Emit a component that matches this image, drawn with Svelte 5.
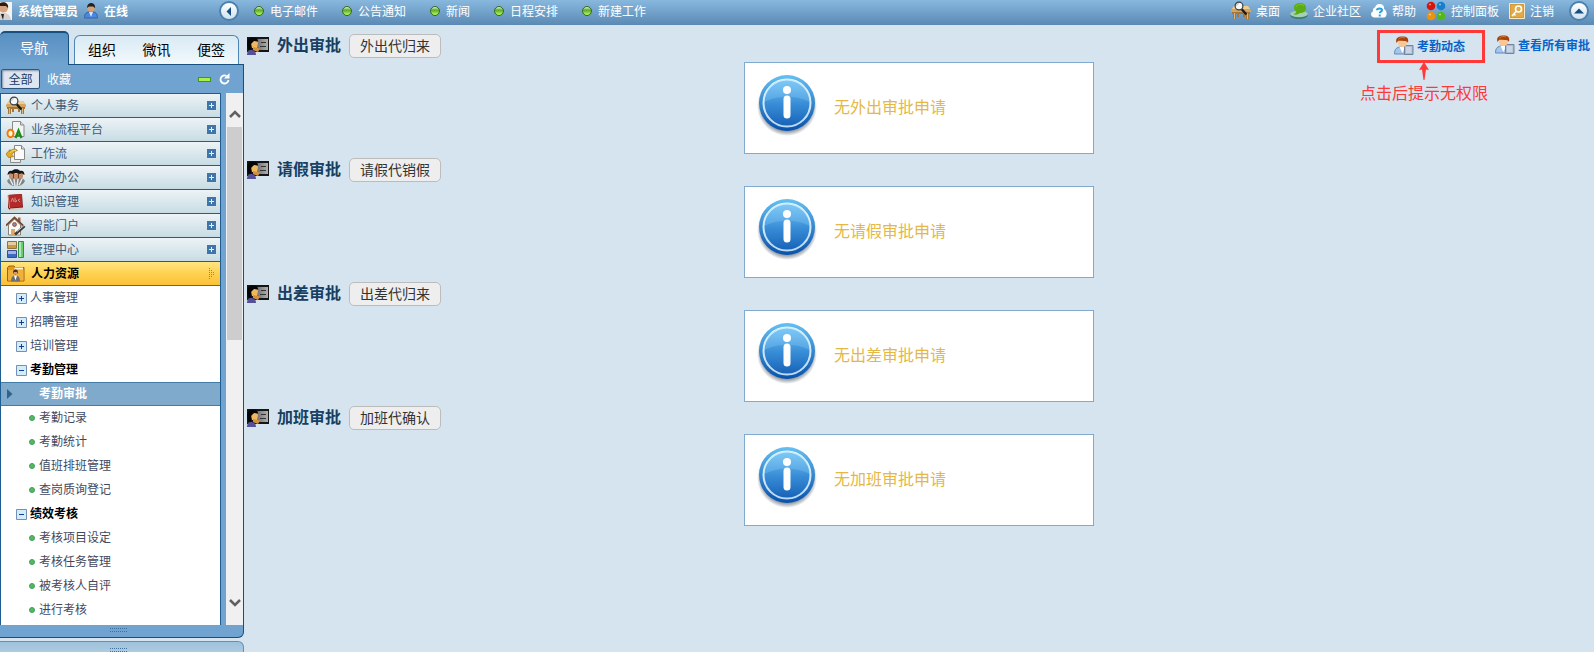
<script lang="ts">
  type Entry = { icon: string; label: string };
  type TreeNode = { kind: 'plus' | 'minus' | 'leaf'; label: string; active?: boolean };

  const shortcuts = ['电子邮件', '公告通知', '新闻', '日程安排', '新建工作'];

  const tools: Entry[] = [
    { icon: 'desk', label: '桌面' },
    { icon: 'community', label: '企业社区' },
    { icon: 'help', label: '帮助' },
    { icon: 'panel', label: '控制面板' },
    { icon: 'key', label: '注销' },
  ];

  const modules: Entry[] = [
    { icon: 'desk', label: '个人事务' },
    { icon: 'oa', label: '业务流程平台' },
    { icon: 'flow', label: '工作流' },
    { icon: 'office', label: '行政办公' },
    { icon: 'book', label: '知识管理' },
    { icon: 'house', label: '智能门户' },
    { icon: 'blocks', label: '管理中心' },
  ];

  const tree: TreeNode[] = [
    { kind: 'plus', label: '人事管理' },
    { kind: 'plus', label: '招聘管理' },
    { kind: 'plus', label: '培训管理' },
    { kind: 'minus', label: '考勤管理' },
    { kind: 'leaf', label: '考勤审批', active: true },
    { kind: 'leaf', label: '考勤记录' },
    { kind: 'leaf', label: '考勤统计' },
    { kind: 'leaf', label: '值班排班管理' },
    { kind: 'leaf', label: '查岗质询登记' },
    { kind: 'minus', label: '绩效考核' },
    { kind: 'leaf', label: '考核项目设定' },
    { kind: 'leaf', label: '考核任务管理' },
    { kind: 'leaf', label: '被考核人自评' },
    { kind: 'leaf', label: '进行考核' },
  ];

  const approvals = [
    { title: '外出审批', action: '外出代归来', empty: '无外出审批申请' },
    { title: '请假审批', action: '请假代销假', empty: '无请假审批申请' },
    { title: '出差审批', action: '出差代归来', empty: '无出差审批申请' },
    { title: '加班审批', action: '加班代确认', empty: '无加班审批申请' },
  ];
</script>

{#snippet glyph(name: string)}
  {#if name === 'desk'}
    <svg width="20" height="20" viewBox="0 0 20 20" aria-hidden="true">
      <path d="M1 10h18v3h-1v5h-3v-5h-1v3h-2v-3H8v3H6v-3H5v5H2v-5H1z" fill="#a67538" />
      <path d="m0 9 3-4h14l3 4v2H0z" fill="#d4a463" />
      <path d="m1 8 2-3h14l2 3z" fill="#eecb91" />
      <path d="M3 12h1v6H3zM16 12h1v6h-1z" fill="#dfb577" />
      <path d="m10.500 8 5 5.500" stroke="#1d1d1d" stroke-width="2.400" />
      <circle cx="8" cy="5" r="3.900" fill="#f4f8fa" stroke="#3c3c3c" stroke-width="1.200" />
      <path d="M5.500 5A3 3 0 0 1 8 2.500" fill="none" stroke="#b8c2cc" />
    </svg>
  {:else if name === 'community'}
    <svg width="18" height="18" viewBox="0 0 18 18" aria-hidden="true">
      <ellipse cx="9" cy="13.500" rx="8.800" ry="3.500" fill="#397c73" />
      <ellipse cx="9" cy="12" rx="8.800" ry="3.300" fill="#a6d0b5" />
      <path d="M4 5.500C4 2.500 6.500 1 10 1s6 1.700 6 5-2.500 5-6 5c-2.500 2-5 2-7 1 2-.3 3-1.200 3.300-2.300C4.700 9 4 7.500 4 5.500z" fill="#5bad13" />
      <path d="M6 5c1-3 6-3.500 8-1" fill="none" stroke="#7fc934" />
    </svg>
  {:else if name === 'help'}
    <svg width="16" height="16" viewBox="0 0 16 16" aria-hidden="true">
      <path d="M3 14.500c-3.500-.5-4-5-1-6C1.500 6 3 4.500 4 4.500 5 1.500 7 .5 9 1c3 0 4.500 2.500 4 5 3.500 1.500 3.500 8 0 8.500z" fill="#fff" />
      <path d="M6 7.200c0-2.400 5-2.400 5 0 0 1.500-2.300 1.300-2.300 3" fill="none" stroke="#20a4dd" stroke-width="2" />
      <path d="M7.700 11.500h2v2h-2z" fill="#20a4dd" />
    </svg>
  {:else if name === 'panel'}
    <svg width="20" height="20" viewBox="0 0 20 20" aria-hidden="true">
      <circle cx="5" cy="5" r="4.300" fill="#d8150d" />
      <circle cx="15" cy="5" r="4.300" fill="#167fd0" />
      <circle cx="5" cy="15" r="4.300" fill="#ed930b" />
      <circle cx="15" cy="15" r="4.300" fill="#52b915" />
      <path d="M3 3.500h2M13 3.500h2M3 13.500h2M13 13.500h2" stroke="#fff" stroke-width="1.500" opacity=".5" />
    </svg>
  {:else if name === 'key'}
    <svg width="16" height="16" viewBox="0 0 16 16" aria-hidden="true">
      <path d="M.5.5h15v15H.5z" fill="#d59a32" stroke="#f8e8c4" />
      <path d="M2 2h12v12H2z" fill="#dfaa4a" />
      <circle cx="9.500" cy="6" r="3" fill="none" stroke="#fff" stroke-width="1.600" />
      <path d="m7.500 8-4.500 5M4.500 10.500l2 2" stroke="#fff" stroke-width="1.500" />
    </svg>
  {:else if name === 'oa'}
    <svg width="20" height="20" viewBox="0 0 20 20" aria-hidden="true">
      <path d="M6.500 1.500h8L18 5v11.500H6.500z" fill="#f2f3f4" stroke="#8a8a8a" />
      <path d="M14.500 1.500V5H18" fill="#ddd" stroke="#8a8a8a" />
      <ellipse cx="4.500" cy="13.500" rx="3" ry="3.800" fill="#fff3d8" stroke="#f27a00" stroke-width="2" />
      <path d="m9.500 18 3-7.500 3 7.500M10.500 15.500h4" fill="none" stroke="#188d19" stroke-width="2.200" />
    </svg>
  {:else if name === 'flow'}
    <svg width="20" height="20" viewBox="0 0 20 20" aria-hidden="true">
      <path d="M4.500 6.500h10v12h-10z" fill="#eee" stroke="#8c8c8c" />
      <path d="M8.500 1.500h7L18.500 5v10.500h-10z" fill="#fafafa" stroke="#888" />
      <path d="M15.500 1.500V5h3" fill="#ddd" stroke="#888" />
      <path d="M0 10 4 5.500v2C6 5 9 4 11.500 6.500 9 7 7 8.500 6 10.500l1.500 2-5 1z" fill="#e5ac1b" stroke="#a66d08" stroke-width=".7" />
      <path d="M4 8.500C6 6.500 8 6 10 6.500" fill="none" stroke="#f8dc6e" />
    </svg>
  {:else if name === 'office'}
    <svg width="20" height="20" viewBox="0 0 20 20" aria-hidden="true">
      <path d="M1 13c1-2 3-3 5-3h8c2 0 4 1 5 3-2 4-5 5-9 5s-7-1-9-5z" fill="#7f8484" />
      <path d="M4 11 7 17M8 11l1 7M12 11l-1 7M16 11l-3 6" stroke="#e8ebeb" stroke-width="1.500" />
      <path d="M3 6h14v3c-1 2-3 2-4 1-2 2-4 2-6 0-2 1-4 0-4-1z" fill="#c98f6c" />
      <path d="M7.500 6v4M12.500 6v4" stroke="#6e4028" />
      <path d="M1.500 7c0-4 3-5 4.500-4C7 .5 13 .5 14 3c2-1 4.500 0 4.500 4L16 5.500 13 6l-3-1-3 1-3-.5z" fill="#171513" />
    </svg>
  {:else if name === 'book'}
    <svg width="20" height="20" viewBox="0 0 20 20" aria-hidden="true">
      <path d="m2 3 14-1 1 14-13 2-2-2z" fill="#7d1514" />
      <path d="m4 16.500 13-1v2L4 19z" fill="#d6cfc4" />
      <path d="m2 3 14-1v12.500L3.500 16z" fill="#b22a29" />
      <path d="M2 3 3.500 16" stroke="#df8d88" />
      <path d="m5 10 1.500-4L8 10M9 5.500V10l2-1-1.500-1.500M14 7l-2 1 2 2" fill="none" stroke="#dba29b" stroke-width=".8" />
    </svg>
  {:else if name === 'house'}
    <svg width="20" height="20" viewBox="0 0 20 20" aria-hidden="true">
      <path d="M2.500 9 8.500 3l6 6v10h-12z" fill="#fbfaf7" stroke="#8b8177" />
      <path d="M12 1.500h2.500V6H12z" fill="#9a6548" />
      <path d="m0 9.500 8.500-8 8.500 8" fill="none" stroke="#754a32" stroke-width="1.800" />
      <circle cx="8.500" cy="8.500" r="1.900" fill="#7098c4" stroke="#b24128" />
      <path d="M5 13h4v6H5z" fill="#dba870" />
      <path d="m9 18.500 9.500-8.500" stroke="#3c3c3c" stroke-width="2.800" />
      <path d="m11 15.500 7-6" stroke="#ccc" />
    </svg>
  {:else if name === 'blocks'}
    <svg width="20" height="20" viewBox="0 0 20 20" aria-hidden="true">
      <path d="M1.500 1.500h9v7h-9z" fill="#c99d3f" stroke="#8f7340" />
      <path d="M1.500 10.500h9v7h-9z" fill="#4169c4" stroke="#384f8e" />
      <path d="M12.500 1.500h5v16h-5z" fill="#69ce6f" stroke="#348d47" />
      <path d="M2 2h8v3H2zM2 11h8v3H2zM13 2h2v15h-2z" fill="#fff" opacity=".5" />
    </svg>
  {:else if name === 'folder'}
    <svg width="20" height="20" viewBox="0 0 20 20" aria-hidden="true">
      <path d="M1.500 3.500 3 2h5l1.500 1.500H18v13.500H1.500z" fill="#e39a1e" stroke="#a66104" />
      <path d="M9 3.500h8v2H8z" fill="#fff4d8" />
      <path d="M2 6h15.500v10.500H2z" fill="#eeb13e" />
      <circle cx="9.500" cy="8" r="2.400" fill="#4d2f1b" />
      <path d="M8 8h3v2H8z" fill="#d49b71" />
      <path d="M5 17.500c0-5 2-6 4.500-6s4.500 1 4.500 6z" fill="#6c7074" />
      <path d="m8 11.500 1.500 5 1.500-5z" fill="#fff" />
    </svg>
  {:else if name === 'clerk'}
    <svg width="20" height="20" viewBox="0 0 20 20" aria-hidden="true">
      <path d="M.5 18c0-5 2-7 7-7s7 2 7 7z" fill="#a3c6ee" stroke="#6489b8" />
      <path d="m5.500 11 3 6 2.500-6z" fill="#fff" />
      <path d="M10.500 9.500h8.500v9h-8.500z" fill="#a9bad3" stroke="#71859c" />
      <path d="M12 12h5.500M12 14h5.500M12 16h5.500" stroke="#e9f0f8" />
      <circle cx="8.500" cy="6.500" r="4.600" fill="#f7c896" />
      <path d="M2.500 7C1 2 4 .5 8.500.5S15 2 14 7c-.5-1.500-2-2-4-2-3 0-5-.5-6 0z" fill="#a8420c" />
      <path d="M4.500 3C6 1.500 9 1 11 2" fill="none" stroke="#dc7830" />
    </svg>
  {/if}
{/snippet}

<svg class="defs" width="0" height="0" aria-hidden="true">
  <defs>
    <linearGradient id="info-face" x2="0" y2="1">
      <stop offset="0" stop-color="#7cc8f6" />
      <stop offset=".5" stop-color="#3a8fd8" />
      <stop offset="1" stop-color="#1762b7" />
    </linearGradient>
    <linearGradient id="info-rim" x2="0" y2="1">
      <stop offset="0" stop-color="#66bff2" />
      <stop offset="1" stop-color="#0751ac" />
    </linearGradient>
    <linearGradient id="info-ring" x2="0" y2="1">
      <stop offset="0" stop-color="#e6faff" />
      <stop offset="1" stop-color="#bcd9f4" />
    </linearGradient>
    <radialGradient id="info-shadow">
      <stop offset=".8" stop-color="#234" stop-opacity=".6" />
      <stop offset="1" stop-color="#234" stop-opacity="0" />
    </radialGradient>
    <linearGradient id="id-card" x2="1">
      <stop offset="0" stop-color="#6d6d6d" />
      <stop offset="1" stop-color="#b0b0b0" />
    </linearGradient>
  </defs>
</svg>

<div class="page">
  <header class="topbar">
    <div class="user">
      <svg width="12" height="18" viewBox="0 0 12 18" aria-hidden="true">
        <path d="M0 0h12v18H0z" fill="#f5f3ef" />
        <path d="M0 11c6-1 10 1 11 7H0z" fill="#d3d0ce" />
        <circle cx="3.500" cy="6" r="4.500" fill="#d7a27f" />
        <path d="M0 1c5-2 9 1 8 5L6 4H0z" fill="#2b1b12" />
        <path d="m1 12 2 6 1-6z" fill="#222" />
      </svg>
      <strong>系统管理员</strong>
      <svg width="14" height="16" viewBox="0 0 14 16" aria-hidden="true">
        <path d="M.5 15c0-5 2-6 6.500-6s6.500 1 6.500 6z" fill="#4b86df" stroke="#3464ac" />
        <path d="m5 9 2 5 2-5z" fill="#d3e8ff" />
        <circle cx="7" cy="5" r="3.800" fill="#d9a172" />
        <path d="M3 5c0-7 9-6 8 0L9 3.500H5z" fill="#222" />
      </svg>
      <strong>在线</strong>
    </div>
    <button class="round" aria-label="收起">
      <svg width="20" height="20" viewBox="0 0 20 20"><path d="m12 6-4.500 4.500L12 15z" fill="#174f83" /></svg>
    </button>
    <nav class="shortcuts">
      {#each shortcuts as label}
        <a href="#top"><span class="ball"></span>{label}</a>
      {/each}
    </nav>
    <nav class="tools">
      {#each tools as tool}
        <a href="#top">{@render glyph(tool.icon)}{tool.label}</a>
      {/each}
    </nav>
    <button class="round" aria-label="向上">
      <svg width="20" height="20" viewBox="0 0 20 20"><path d="m5 12.500 5-5 5 5z" fill="#174f83" /></svg>
    </button>
  </header>

  <div class="columns">
    <aside>
      <div class="tabs">
        <button class="tab current">导航</button>
        <div class="tab-group">
          <button class="tab">组织</button>
          <button class="tab">微讯</button>
          <button class="tab">便签</button>
        </div>
      </div>

      <div class="panel">
        <div class="filter">
          <button class="pressed">全部</button>
          <button>收藏</button>
          <span class="dash"></span>
          <button class="reload" aria-label="刷新">
            <svg width="12" height="14" viewBox="0 0 12 14">
              <path d="M7.500 4A4 4 0 1 0 9.500 8" fill="none" stroke="#fff" stroke-width="1.800" />
              <path d="M10.500 1v5.500H5z" fill="#fff" />
            </svg>
          </button>
        </div>

        <div class="menu-wrap">
          <nav class="menu">
            {#each modules as item}
              <a class="module" href="#top">
                {@render glyph(item.icon)}
                <span class="name">{item.label}</span>
                <svg width="9" height="9" viewBox="0 0 9 9" aria-hidden="true">
                  <path d="M0 0h9v9H0z" fill="#3f75aa" />
                  <path d="M2 4.500h5M4.500 2v5" stroke="#e5f2fa" />
                </svg>
              </a>
            {/each}
            <a class="module open" href="#top">
              {@render glyph('folder')}
              <span class="name">人力资源</span>
              <svg width="8" height="11" viewBox="0 0 8 11" aria-hidden="true">
                <path d="M1.500 0v11M3.500 2v7M5.500 4v3" stroke="#a98a20" stroke-dasharray="1 1" />
              </svg>
            </a>
            {#each tree as node}
              <a class="node {node.kind}" class:active={node.active} href="#top">
                {#if node.active}
                  <svg width="6" height="10" viewBox="0 0 6 10" aria-hidden="true">
                    <path d="m0 0 5.500 5L0 10z" fill="#2f638f" />
                  </svg>
                {:else if node.kind === 'leaf'}
                  <span class="dot"></span>
                {:else}
                  <svg width="11" height="11" viewBox="0 0 11 11" aria-hidden="true">
                    <path d="M.5.5h10v10H.5z" fill="#d3ecfa" stroke="#7590b5" />
                    <path d={node.kind === 'plus' ? 'M3 5.5h5M5.5 3v5' : 'M3 5.5h5'} stroke="#123e94" />
                  </svg>
                {/if}
                <span class="name">{node.label}</span>
              </a>
            {/each}
          </nav>
          <div class="scrollbar">
            <svg width="12" height="8" viewBox="0 0 12 8" aria-hidden="true">
              <path d="m1 7 5-5 5 5" fill="none" stroke="#606060" stroke-width="2.500" />
            </svg>
            <div class="track"><div class="thumb"></div></div>
            <svg width="12" height="8" viewBox="0 0 12 8" aria-hidden="true">
              <path d="m1 1 5 5 5-5" fill="none" stroke="#606060" stroke-width="2.500" />
            </svg>
          </div>
        </div>
        <div class="grip"><span></span></div>
      </div>
      <div class="next-panel"><span></span></div>
    </aside>

    <main>
      <div class="links">
        <div class="marked">
          <a href="#top">{@render glyph('clerk')}考勤动态</a>
          <div class="note">
            <svg width="12" height="18" viewBox="0 0 12 18" aria-hidden="true">
              <path d="m6 0 5 8-3-.5L6.500 18h-1L4 7.500 1 8z" fill="#ff3838" />
            </svg>
            <span>点击后提示无权限</span>
          </div>
        </div>
        <a href="#top">{@render glyph('clerk')}查看所有审批</a>
      </div>

      {#each approvals as item}
        <section>
          <div class="heading">
            <svg width="22" height="18" viewBox="0 0 22 18" aria-hidden="true">
              <path d="M0 0h22v15H0z" fill="#151515" />
              <path d="M9 2h12v11H9z" fill="url(#id-card)" />
              <path d="M14 5.500h5M13 9.500h6" stroke="#333" />
              <path d="M0 18c0-4 2-5 4-5s5 1 5 5z" fill="#55509a" />
              <path d="M4 6c1-3 6-3 7 0l-1 5H5z" fill="#f2b65b" />
              <path d="M1 12C-1 4 1 .5 6 .5c4 0 5 2 5 4L7 4 4 7v6z" fill="#050505" />
              <path d="m6 10 7 1.500-2 3.500-5-2z" fill="#d2903e" />
            </svg>
            <h2>{item.title}</h2>
            <button>{item.action}</button>
          </div>
          <div class="empty">
            <svg width="60" height="64" viewBox="0 0 60 64" aria-hidden="true">
              <ellipse cx="30" cy="33" rx="30" ry="30" fill="url(#info-shadow)" />
              <circle cx="30" cy="30" r="28" fill="url(#info-rim)" />
              <circle cx="30" cy="30" r="23.500" fill="url(#info-face)" stroke="url(#info-ring)" stroke-width="2" />
              <path d="M7 29a23 23 0 0 1 46 0c-14-7-32-7-46 0z" fill="#8bd0fa" opacity=".3" />
              <circle cx="30" cy="17" r="4" fill="#fff" />
              <path d="M30 26v16" stroke="#fff" stroke-width="7" stroke-linecap="round" />
            </svg>
            <p>{item.empty}</p>
          </div>
        </section>
      {/each}
    </main>
  </div>
</div>

<style>
  :global(body) {
    margin: 0;
    background: #d6e4ef;
  }

  .page {
    height: 100vh;
    overflow: hidden;
    background: #d6e4ef;
    font: 12px/20px 'Noto Sans CJK SC', sans-serif;
    color: #3f4a5f;
  }

  .defs {
    display: block;
  }

  svg {
    flex: none;
  }

  a {
    color: inherit;
    text-decoration: none;
  }

  button {
    padding: 0;
    border: 0;
    background: none;
    color: inherit;
    font: inherit;
    cursor: pointer;
  }

  .topbar {
    display: flex;
    align-items: center;
    box-sizing: border-box;
    height: 25px;
    padding: 0 5px 4px 0;
    background: linear-gradient(#88b8de, #5a8ab4);
    color: #fff;
    white-space: nowrap;
  }

  .user {
    display: flex;
    align-items: center;
    gap: 6px;
    width: 219px;
  }

  .round {
    flex: none;
    box-sizing: border-box;
    width: 20px;
    height: 20px;
    border: 2px solid #4c80ad;
    border-radius: 50%;
    background: linear-gradient(#fff, #cfe2f0);

    & svg {
      display: block;
      margin: -2px;
    }
  }

  .shortcuts {
    display: flex;
    gap: 24px;
    flex: 1;
    padding-left: 15px;

    & a {
      display: flex;
      align-items: center;
      gap: 6px;
    }
  }

  .ball {
    box-sizing: border-box;
    width: 10px;
    height: 10px;
    border: 1px solid #35691c;
    border-radius: 50%;
    background: linear-gradient(#e4e8e0, #5cab28 40%, #b6ff64);
  }

  .tools {
    display: flex;
    gap: 10px;
    padding-right: 15px;

    & a {
      display: flex;
      align-items: center;
      gap: 5px;
    }
  }

  .columns {
    display: flex;
    align-items: flex-start;
  }

  aside {
    flex: none;
    width: 244px;
    padding-top: 6px;
  }

  .tabs {
    display: flex;
    align-items: flex-end;
    gap: 5px;
    font-size: 14px;
    color: #000;
  }

  .tab {
    padding-bottom: 2px;
  }

  .tab.current {
    box-sizing: border-box;
    width: 69px;
    height: 34px;
    margin-bottom: -1px;
    padding-bottom: 4px;
    border: 1px solid #15507f;
    border-width: 2px 1px 0 0;
    border-radius: 5px 5px 0 0;
    background: linear-gradient(#588fc2, #70a3cf);
    color: #fff;
    z-index: 1;
  }

  .tab-group {
    display: flex;
    justify-content: space-between;
    box-sizing: border-box;
    width: 165px;
    height: 29px;
    padding: 0 13px;
    border: 1px solid #4d86b4;
    border-bottom: 0;
    border-radius: 6px 6px 0 0;
    background: linear-gradient(#d9eaf4, #f2f9fc);
  }

  .panel {
    border: 1px solid #15507f;
    border-width: 1px 1px 1px 0;
    border-radius: 0 0 6px 0;
    background: #70a3cf;
  }

  .filter {
    display: flex;
    align-items: center;
    height: 28px;
    padding: 0 12px 0 1px;
    color: #fff;

    & .pressed {
      box-sizing: border-box;
      width: 39px;
      height: 20px;
      margin-right: 7px;
      border: 1px solid #2f567c;
      border-radius: 2px;
      box-shadow: inset 1px 1px 2px #8594a8;
      background: #dfe6f1;
      color: #173c63;
      line-height: 18px;
    }
  }

  .dash {
    box-sizing: border-box;
    width: 13px;
    height: 5px;
    margin: 0 8px 0 auto;
    border: 1px solid #3e9a13;
    background: #a9f04c;
  }

  .reload svg {
    display: block;
  }

  .menu-wrap {
    display: flex;
    gap: 5px;
  }

  .menu {
    box-sizing: border-box;
    width: 221px;
    padding-bottom: 3px;
    border: 1px solid #1f5c8f;
    border-bottom: 0;
    background: #fff;
  }

  .name {
    padding-bottom: 2px;
  }

  .module {
    display: flex;
    align-items: center;
    gap: 5px;
    box-sizing: border-box;
    height: 24px;
    padding: 0 4px 0 5px;
    border-bottom: 1px solid #1f5c8f;
    background: linear-gradient(#edf3f6, #c8dce4);
    color: #3d5a78;

    & .name {
      flex: 1;
    }

    &.open {
      border-color: #82660e;
      background: linear-gradient(#ffe583, #ffd354 45%, #fbc138);
      color: #000;
      font-weight: 700;
    }
  }

  .node {
    display: flex;
    align-items: center;
    gap: 3px;
    box-sizing: border-box;
    height: 24px;
    padding-left: 15px;

    &.minus {
      color: #000;
      font-weight: 700;
    }

    &.leaf {
      gap: 4px;
      padding-left: 28px;
    }

    &.active {
      gap: 26px;
      padding-left: 6px;
      border: 1px solid #437ba7;
      border-width: 1px 0;
      background: #80aacc;
      color: #fff;
      font-weight: 700;
    }
  }

  .dot {
    box-sizing: border-box;
    width: 6px;
    height: 6px;
    border: 1px solid #459b70;
    border-radius: 50%;
    background: #52bc50;
  }

  .scrollbar {
    display: flex;
    flex: 1;
    flex-direction: column;
    align-items: center;
    gap: 9px;
    padding: 17px 0 18px;
    background: #f0f0f0;
  }

  .track {
    flex: 1;
    align-self: stretch;
    padding: 0 1px;
  }

  .thumb {
    height: 213px;
    background: #cdcdcd;
  }

  .grip,
  .next-panel {
    display: flex;
    justify-content: center;
    box-sizing: border-box;
    height: 12px;
    padding: 3px 0 0 0;

    & span {
      width: 17px;
      height: 4px;
      border: dotted #416f9e;
      border-width: 1px 0;
      box-sizing: border-box;
    }
  }

  .grip {
    padding-right: 7px;
  }

  .next-panel {
    height: 24px;
    margin-top: 3px;
    padding: 6px 7px 0 0;
    border: 1px solid #6790ad;
    border-left: 0;
    border-radius: 0 6px 0 0;
    background: linear-gradient(#9fc1db, #bed6e6);
  }

  main {
    position: relative;
    flex: 1;
    padding-top: 7px;
  }

  section {
    display: flex;
    flex-direction: column;
    height: 124px;
  }

  .heading {
    display: flex;
    align-items: center;
    height: 28px;
    padding-left: 3px;

    & h2 {
      margin: 0 8px;
      padding-bottom: 4px;
      color: #163f61;
      font-size: 16px;
      line-height: 24px;
    }

    & button {
      box-sizing: border-box;
      height: 24px;
      padding: 0 10px 2px;
      border: 1px solid #bcbcbc;
      border-radius: 5px;
      background: #eee;
      color: #333;
      font-size: 14px;
      line-height: 20px;
    }
  }

  .empty {
    display: flex;
    align-items: flex-start;
    gap: 17px;
    box-sizing: border-box;
    width: 350px;
    height: 92px;
    margin: 2px auto 0;
    padding: 10px 12px;
    border: 1px solid #80aace;
    background: #fff;

    & p {
      margin: 21px 0 0;
      color: #e5b846;
      font-size: 16px;
      line-height: 24px;
    }
  }

  /* sits in the same band as the first section heading */
  .links {
    position: absolute;
    top: 5px;
    right: 4px;
    display: flex;
    gap: 10px;
    color: #0563c9;
    font-weight: 700;

    & a {
      display: flex;
      align-items: center;
      gap: 3px;
      height: 30px;
    }
  }

  .marked {
    position: relative;
    box-sizing: border-box;
    width: 108px;
    height: 33px;
    border: 3px solid #ff3838;

    & > a {
      height: 25px;
      padding-left: 14px;
    }
  }

  .note {
    position: absolute;
    top: 29px;
    left: -20px;
    display: flex;
    flex-direction: column;
    align-items: center;
    color: #ff3838;
    font-size: 16px;
    font-weight: 400;
    line-height: 24px;
    white-space: nowrap;
  }
</style>
